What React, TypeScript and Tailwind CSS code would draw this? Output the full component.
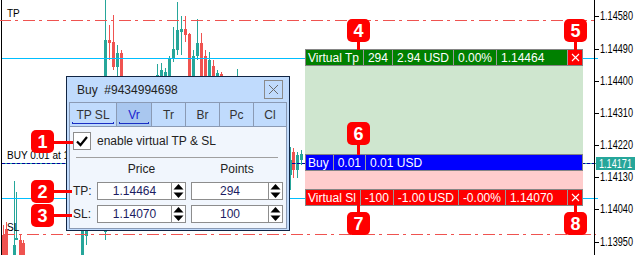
import React from 'react';

const UP = '#26a69a';
const DN = '#ef5350';

// x, wickTop, wickBottom, bodyTop, bodyBottom, bullish
const candles: [number, number, number, number, number, boolean][] = [
  [104, 0, 80, 40, 80, true],
  [108, 25, 60, 40, 43, false],
  [112, 15, 70, 42, 67, false],
  [116, 45, 80, 53, 67, true],
  [120, 50, 80, 53, 80, false],
  [156, 64, 80, 75, 80, true],
  [160, 63, 80, 70, 80, true],
  [164, 68, 80, 72, 80, true],
  [168, 56, 80, 58, 80, true],
  [172, 27, 62, 49, 59, true],
  [176, 2, 55, 30, 50, true],
  [180, 16, 55, 29, 32, true],
  [184, 16, 42, 29, 35, false],
  [188, 33, 80, 34, 80, false],
  [192, 50, 80, 56, 80, true],
  [196, 19, 60, 43, 56, true],
  [200, 33, 80, 43, 80, false],
  [204, 50, 80, 56, 80, false],
  [208, 52, 80, 60, 80, true],
  [212, 60, 80, 66, 80, false],
  [216, 70, 80, 73, 80, true],
  [220, 72, 80, 74, 80, false],
  [236, 69, 80, 76, 80, true],
  // lower left
  [2, 225, 255, 235, 255, false],
  [5, 222, 255, 229, 255, false],
  [13, 181, 255, 245, 255, true],
  [15, 192, 240, 238, 240, true],
  [19, 235, 255, 240, 255, false],
  [22, 240, 255, 243, 255, false],
  // under the dialog
  [81, 190, 255, 200, 255, true],
  [85, 190, 245, 200, 236, true],
  [104, 200, 240, 210, 232, true],
  // right of the dialog
  [289, 147, 190, 160, 175, true],
  [292, 148, 178, 152, 170, false],
  [296, 152, 178, 155, 170, true],
  [300, 150, 165, 154, 160, true],
];

const axisLabels: [string, string][] = [
  ['1.14580', 'top-[9px]'],
  ['1.14490', 'top-[42px]'],
  ['1.14400', 'top-[74px]'],
  ['1.14310', 'top-[106px]'],
  ['1.14220', 'top-[138px]'],
  ['1.14130', 'top-[170px]'],
  ['1.14040', 'top-[202px]'],
  ['1.13950', 'top-[235px]'],
];
const ticks = [16, 49, 81, 113, 145, 177, 209, 242];

function ChartLayer() {
  return (
    <svg className="absolute inset-0" width={635} height={255} shapeRendering="crispEdges">
      <rect x={1} y={0} width={1} height={255} fill="#000" />
      {candles.map(([x, wt, wb, bt, bb, up], i) => (
        <g key={i} fill={up ? UP : DN}>
          <rect x={x + 1} y={wt} width={1} height={wb - wt} />
          <rect x={x} y={bt} width={3} height={Math.max(bb - bt, 1)} />
        </g>
      ))}
      <line x1={0} x2={596} y1={20.5} y2={20.5} stroke={DN} strokeDasharray="12 4 3 5" strokeDashoffset={1} />
      <line x1={2} x2={598} y1={58.5} y2={58.5} stroke="#00bfff" />
      <line x1={2} x2={596} y1={163.5} y2={163.5} stroke={UP} />
      <line x1={2} x2={596} y1={163.5} y2={163.5} stroke="#0000a0" strokeDasharray="3 2" />
      <line x1={2} x2={598} y1={198.5} y2={198.5} stroke="#00bfff" />
      <line x1={2} x2={596} y1={234.5} y2={234.5} stroke={DN} strokeDasharray="12 4 3 5" strokeDashoffset={-1} />
      <rect x={594} y={0} width={1} height={255} fill="#000" />
      {ticks.map((y) => (
        <rect key={y} x={595} y={y} width={4} height={1} fill="#000" />
      ))}
    </svg>
  );
}

function CloseX({ color }: { color: string }) {
  return (
    <svg width={9} height={9} viewBox="0 0 9 9">
      <path d="M1 1 L8 8 M8 1 L1 8" stroke={color} strokeWidth={1.1} />
    </svg>
  );
}

function Bar({ bg, cells, close }: { bg: string; cells: string[]; close?: boolean }) {
  return (
    <div className={`flex h-[17px] border border-[#858585] text-[12px] leading-none text-white ${bg}`}>
      {cells.map((c, i) => (
        <div
          key={i}
          className={
            i === 0
              ? 'flex items-center pl-[2px] pr-[4px] whitespace-pre'
              : 'flex items-center px-[4px] border-l border-[#9a9a9a] whitespace-pre'
          }
        >
          {c}
        </div>
      ))}
      {close && (
        <div className="ml-auto w-[15px] bg-[#ff0000] border-l border-[#9a9a9a] flex items-center justify-center">
          <CloseX color="#ffffff" />
        </div>
      )}
    </div>
  );
}

function Spinner() {
  return (
    <div className="flex-1 bg-white flex items-center justify-center">
      <svg width={11} height={16} viewBox="0 0 11 16">
        <path d="M0.5 6.5 L5.5 1 L10.5 6.5 Z" fill="#000" />
        <path d="M0.5 9.5 L5.5 15 L10.5 9.5 Z" fill="#000" />
      </svg>
    </div>
  );
}

function Field({ value, wide }: { value: string; wide?: boolean }) {
  return (
    <div className={`flex h-[18px] border border-[#8d8d8d] ${wide ? 'w-[92px]' : 'w-[89px]'}`}>
      <div
        className={`bg-white border-r border-[#8d8d8d] flex items-center justify-center text-[12px] text-[#1c1c62] ${
          wide ? 'w-[77px]' : 'w-[74px]'
        }`}
      >
        {value}
      </div>
      <Spinner />
    </div>
  );
}

function Tab({ label, w, active, underline }: { label: string; w: string; active?: boolean; underline?: boolean }) {
  return (
    <div
      className={`relative flex items-center justify-center border-y border-r border-[#8a9ab4] text-[12px] ${w} ${
        active ? 'bg-[#a9c7ef] text-[#1a22d0]' : 'text-[#333]'
      }`}
    >
      {label}
      {underline && (
        <div className="absolute left-[2px] right-[2px] bottom-[2px] h-[2px] border-x border-b border-[#1a2fc4]" />
      )}
    </div>
  );
}

function Dialog() {
  return (
    <div className="absolute left-[66px] top-[76px] w-[224px] h-[155px] border border-[#112544] bg-[#c0dbfd] px-[2px] pb-[1px] flex flex-col text-[#222]">
      <div className="h-[25px] flex items-center justify-between pl-[8px] pr-[4px]">
        <span className="whitespace-pre text-[12px]">Buy  #9434994698</span>
        <div className="w-[19px] h-[19px] border border-[#8a8a8a] flex items-center justify-center">
          <svg width={11} height={11} viewBox="0 0 11 11">
            <path d="M1 1 L10 10 M10 1 L1 10" stroke="#6a6a6a" strokeWidth={1} />
          </svg>
        </div>
      </div>
      <div className="h-[25px] flex">
        <div className="flex border-l border-[#8a9ab4]">
          <Tab label="TP SL" w="w-[47px]" underline />
        </div>
        <Tab label="Vr" w="w-[35px]" active underline />
        <Tab label="Tr" w="w-[34px]" />
        <Tab label="Br" w="w-[34px]" />
        <Tab label="Pc" w="w-[34px]" />
        <Tab label="Cl" w="w-[33px]" />
      </div>
      <div className="flex-1 border-x border-b border-[#8a9ab4] bg-[#f1f6fd] flex flex-col text-[12px]">
        <div className="mt-[5px] ml-[3px] flex items-center gap-[6px] h-[18px]">
          <div className="w-[18px] h-[18px] bg-white border border-[#8d8d8d] flex items-center justify-center">
            <svg width={14} height={14} viewBox="0 0 14 14">
              <path d="M2 7.5 L5.5 11 L12 3" stroke="#000" strokeWidth={2.2} fill="none" />
            </svg>
          </div>
          <span>enable virtual TP &amp; SL</span>
        </div>
        <div className="mt-[7px] ml-[6px] w-[202px] h-px bg-[#a0a0a0]" />
        <div className="mt-[4px] ml-[27px] flex gap-[5px] h-[14px] leading-[14px]">
          <div className="w-[89px] text-center">Price</div>
          <div className="w-[92px] text-center">Points</div>
        </div>
        <div className="mt-[6px] ml-[3px] flex items-center">
          <div className="w-[24px]">TP:</div>
          <div className="flex gap-[5px]">
            <Field value="1.14464" />
            <Field value="294" wide />
          </div>
        </div>
        <div className="mt-[5px] ml-[3px] flex items-center">
          <div className="w-[24px]">SL:</div>
          <div className="flex gap-[5px]">
            <Field value="1.14070" />
            <Field value="100" wide />
          </div>
        </div>
      </div>
    </div>
  );
}

function Badge({ n, pos }: { n: number; pos: string }) {
  return (
    <div
      className={`absolute w-[23px] h-[23px] rounded-[5px] bg-[#ff0000] text-white font-bold text-[18px] leading-none flex items-center justify-center ${pos}`}
    >
      {n}
    </div>
  );
}

export default function App() {
  return (
    <div className="relative w-[635px] h-[255px] overflow-hidden bg-white font-['Liberation_Sans',Arial,sans-serif]">
      <ChartLayer />

      <div className="absolute left-[7px] top-[8px] text-[10px] leading-[12px] text-black">TP</div>
      <div className="absolute left-[7px] top-[150px] text-[10px] leading-[12px] text-black whitespace-nowrap">
        BUY 0.01 at 1.14171
      </div>
      <div className="absolute left-[7px] top-[222px] text-[10px] leading-[12px] text-black">SL</div>

      {axisLabels.map(([t, top]) => (
        <div key={t} className={`absolute left-[600px] ${top} text-[12px] leading-[14px] text-black scale-x-[0.76] origin-left`}>
          {t}
        </div>
      ))}
      <div className="absolute left-[596px] top-[157px] w-[39px] h-[13px] bg-[#26a69a] pl-[3px] flex items-center">
        <span className="text-[12px] leading-none text-white scale-x-[0.76] origin-left">1.14171</span>
      </div>

      <div className="absolute left-[305px] top-[49px] w-[278px] flex flex-col">
        <Bar bg="bg-[#008000]" cells={['Virtual Tp', '294', '2.94 USD', '0.00%', '1.14464']} close />
        <div className="h-[88px] bg-[#cfe6cf]" />
        <Bar bg="bg-[#0000ff]" cells={['Buy', '0.01', '0.01 USD']} />
        <div className="h-[18px] bg-[#ffcdcd]" />
        <Bar bg="bg-[#ff0000]" cells={['Virtual Sl', '-100', '-1.00 USD', '-0.00%', '1.14070']} close />
      </div>

      <Dialog />

      {/* callouts */}
      <div className="absolute left-[53px] top-[141px] w-[20px] h-[3px] bg-[#ff0000]" />
      <div className="absolute left-[53px] top-[190px] w-[19px] h-[3px] bg-[#ff0000]" />
      <div className="absolute left-[53px] top-[214px] w-[19px] h-[3px] bg-[#ff0000]" />
      <div className="absolute left-[357px] top-[41px] w-[3px] h-[9px] bg-[#ff0000]" />
      <div className="absolute left-[574px] top-[41px] w-[3px] h-[9px] bg-[#ff0000]" />
      <div className="absolute left-[357px] top-[144px] w-[3px] h-[11px] bg-[#ff0000]" />
      <div className="absolute left-[357px] top-[205px] w-[3px] h-[8px] bg-[#ff0000]" />
      <div className="absolute left-[574px] top-[205px] w-[3px] h-[8px] bg-[#ff0000]" />
      <Badge n={1} pos="left-[31px] top-[130px]" />
      <Badge n={2} pos="left-[31px] top-[180px]" />
      <Badge n={3} pos="left-[31px] top-[204px]" />
      <Badge n={4} pos="left-[347px] top-[19px]" />
      <Badge n={5} pos="left-[564px] top-[19px]" />
      <Badge n={6} pos="left-[347px] top-[122px]" />
      <Badge n={7} pos="left-[347px] top-[212px]" />
      <Badge n={8} pos="left-[564px] top-[212px]" />
    </div>
  );
}
